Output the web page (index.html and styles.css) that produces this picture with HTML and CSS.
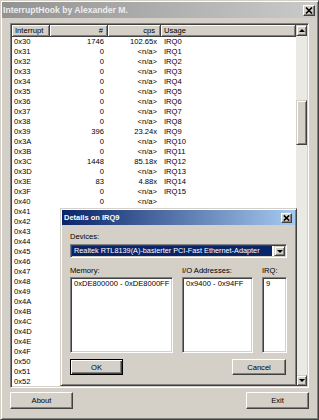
FILE: index.html
```html
<!DOCTYPE html>
<html>
<head>
<meta charset="utf-8">
<link rel="stylesheet" href="styles.css">
</head>
<body>
<div class="window">
  <div class="titlebar inactive">
    <span class="title">InterruptHook by Alexander M.</span>
    <span class="close"><svg width="8" height="7" viewBox="0 0 8 7"><path d="M1 0.5 L7 6.5 M7 0.5 L1 6.5" stroke="#000" stroke-width="1.6"/></svg></span>
  </div>
  <div class="client">
    <div class="listview">
      <div class="list">
        <div class="header">
          <div class="hcell">Interrupt</div>
          <div class="hcell right">#</div>
          <div class="hcell right cps">cps</div>
          <div class="hcell">Usage</div>
        </div>
        <div class="rows">
          <div class="row"><span>0x30</span><span class="r">1746</span><span class="r">102.65x</span><span class="u">IRQ0</span></div>
          <div class="row"><span>0x31</span><span class="r">0</span><span class="r">&lt;n/a&gt;</span><span class="u">IRQ1</span></div>
          <div class="row"><span>0x32</span><span class="r">0</span><span class="r">&lt;n/a&gt;</span><span class="u">IRQ2</span></div>
          <div class="row"><span>0x33</span><span class="r">0</span><span class="r">&lt;n/a&gt;</span><span class="u">IRQ3</span></div>
          <div class="row"><span>0x34</span><span class="r">0</span><span class="r">&lt;n/a&gt;</span><span class="u">IRQ4</span></div>
          <div class="row"><span>0x35</span><span class="r">0</span><span class="r">&lt;n/a&gt;</span><span class="u">IRQ5</span></div>
          <div class="row"><span>0x36</span><span class="r">0</span><span class="r">&lt;n/a&gt;</span><span class="u">IRQ6</span></div>
          <div class="row"><span>0x37</span><span class="r">0</span><span class="r">&lt;n/a&gt;</span><span class="u">IRQ7</span></div>
          <div class="row"><span>0x38</span><span class="r">0</span><span class="r">&lt;n/a&gt;</span><span class="u">IRQ8</span></div>
          <div class="row"><span>0x39</span><span class="r">396</span><span class="r">23.24x</span><span class="u">IRQ9</span></div>
          <div class="row"><span>0x3A</span><span class="r">0</span><span class="r">&lt;n/a&gt;</span><span class="u">IRQ10</span></div>
          <div class="row"><span>0x3B</span><span class="r">0</span><span class="r">&lt;n/a&gt;</span><span class="u">IRQ11</span></div>
          <div class="row"><span>0x3C</span><span class="r">1448</span><span class="r">85.18x</span><span class="u">IRQ12</span></div>
          <div class="row"><span>0x3D</span><span class="r">0</span><span class="r">&lt;n/a&gt;</span><span class="u">IRQ13</span></div>
          <div class="row"><span>0x3E</span><span class="r">83</span><span class="r">4.88x</span><span class="u">IRQ14</span></div>
          <div class="row"><span>0x3F</span><span class="r">0</span><span class="r">&lt;n/a&gt;</span><span class="u">IRQ15</span></div>
          <div class="row"><span>0x40</span><span class="r">0</span><span class="r">&lt;n/a&gt;</span><span class="u"></span></div>
          <div class="row"><span>0x41</span></div>
          <div class="row"><span>0x42</span></div>
          <div class="row"><span>0x43</span></div>
          <div class="row"><span>0x44</span></div>
          <div class="row"><span>0x45</span></div>
          <div class="row"><span>0x46</span></div>
          <div class="row"><span>0x47</span></div>
          <div class="row"><span>0x48</span></div>
          <div class="row"><span>0x49</span></div>
          <div class="row"><span>0x4A</span></div>
          <div class="row"><span>0x4B</span></div>
          <div class="row"><span>0x4C</span></div>
          <div class="row"><span>0x4D</span></div>
          <div class="row"><span>0x4E</span></div>
          <div class="row"><span>0x4F</span></div>
          <div class="row"><span>0x50</span></div>
          <div class="row"><span>0x51</span></div>
          <div class="row"><span>0x52</span></div>
        </div>
      </div>
      <div class="vscroll">
        <div class="sbtn"><span class="arrow-up"></span></div>
        <div class="track"><div class="thumb"></div></div>
        <div class="sbtn"><span class="arrow-down"></span></div>
      </div>
    </div>
    <div class="buttons">
      <div class="btn">About</div>
      <div class="btn">Exit</div>
    </div>
  </div>

  <div class="dialog">
    <div class="titlebar active">
      <span class="dtitle">Details on IRQ9</span>
      <span class="close small"><svg width="7" height="6" viewBox="0 0 7 6"><path d="M0.8 0.4 L6.2 5.6 M6.2 0.4 L0.8 5.6" stroke="#000" stroke-width="1.5"/></svg></span>
    </div>
    <div class="dcontent">
      <div class="label">Devices:</div>
      <div class="combo">
        <div class="combo-text">Realtek RTL8139(A)-basierter PCI-Fast Ethernet-Adapter</div>
        <div class="combo-btn"><span class="arrow-down"></span></div>
      </div>
      <div class="fields">
        <div class="field">
          <div class="label">Memory:</div>
          <div class="box">0xDE800000 - 0xDE8000FF</div>
        </div>
        <div class="field">
          <div class="label">I/O Addresses:</div>
          <div class="box">0x9400 - 0x94FF</div>
        </div>
        <div class="field">
          <div class="label">IRQ:</div>
          <div class="box">9</div>
        </div>
      </div>
      <div class="dbuttons">
        <div class="btn default">OK</div>
        <div class="btn cancel">Cancel</div>
      </div>
    </div>
  </div>
</div>
</body>
</html>
```
FILE: styles.css
```css
html, body {
  margin: 0;
  padding: 0;
  background: #d4d0c8;
}
body {
  font-family: "Liberation Sans", Arial, sans-serif;
  font-size: 7.6px;
  color: #000;
}
.window {
  position: relative;
  width: 319px;
  height: 420px;
  box-sizing: border-box;
  border: 1px solid;
  border-color: #d4d0c8 #404040 #404040 #d4d0c8;
  box-shadow: inset 1px 1px #fff, inset -1px -1px #808080;
  padding: 1px;
  background: #d4d0c8;
  display: flex;
  flex-direction: column;
  overflow: hidden;
}
.titlebar {
  flex: none;
  height: 16px;
  display: flex;
  align-items: center;
  justify-content: space-between;
  padding: 0 2px 0 1px;
}
.titlebar.inactive {
  background: linear-gradient(to right, #929292, #cacaca);
}
.titlebar.active {
  height: 15px;
  background: linear-gradient(to right, #0a246a, #a6caf0);
  padding: 0 3px 0 2px;
}
.title {
  color: #eeeeee;
  font-weight: bold;
  font-size: 8.6px;
}
.dtitle {
  color: #fff;
  font-weight: bold;
  font-size: 7.5px;
}
.close {
  width: 12px;
  height: 11px;
  box-sizing: border-box;
  background: #d4d0c8;
  border: 1px solid;
  border-color: #fff #404040 #404040 #fff;
  box-shadow: inset -1px -1px #808080;
  display: flex;
  align-items: center;
  justify-content: center;
}
.close.small {
  width: 11px;
  height: 10px;
}
.client {
  flex: 1;
  display: flex;
  flex-direction: column;
  padding: 5px 8px 0;
}
.listview {
  flex: none;
  height: 365px;
  box-sizing: border-box;
  border: 1px solid;
  border-color: #808080 #fff #fff #808080;
  box-shadow: inset 1px 1px #404040, inset -1px -1px #d4d0c8;
  padding: 1px;
  display: flex;
  background: #fff;
}
.list {
  flex: 1;
  min-width: 0;
  overflow: hidden;
  display: flex;
  flex-direction: column;
}
.header, .row {
  display: grid;
  grid-template-columns: 38px 58px 53px 1fr;
}
.header {
  flex: none;
  height: 12px;
}
.hcell {
  box-sizing: border-box;
  background: #d4d0c8;
  border-right: 1px solid #404040;
  border-bottom: 1px solid #404040;
  box-shadow: inset 1px 1px #fff, inset -1px -1px #808080;
  line-height: 11px;
  padding: 0 0 0 3px;
  white-space: nowrap;
}
.hcell.right {
  text-align: right;
  padding: 0 4px 0 0;
}
.hcell.cps {
  padding-right: 5px;
}
.rows {
  overflow: hidden;
}
.row {
  height: 10px;
  line-height: 10px;
  white-space: nowrap;
}
.row span {
  padding-left: 2px;
}
.row span.r {
  text-align: right;
  padding: 0 4px 0 0;
}
.row span.u {
  padding-left: 3px;
}
.vscroll {
  flex: none;
  width: 11px;
  display: flex;
  flex-direction: column;
  background: #ebe9e4;
}
.sbtn, .thumb, .combo-btn {
  box-sizing: border-box;
  background: #d4d0c8;
  border: 1px solid;
  border-color: #d4d0c8 #404040 #404040 #d4d0c8;
  box-shadow: inset 1px 1px #fff, inset -1px -1px #808080;
}
.sbtn {
  flex: none;
  height: 11px;
  display: flex;
  align-items: center;
  justify-content: center;
}
.track {
  flex: 1;
}
.thumb {
  margin-top: 64px;
  height: 45px;
}
.arrow-up {
  width: 0;
  height: 0;
  border-left: 3px solid transparent;
  border-right: 3px solid transparent;
  border-bottom: 3px solid #000;
}
.arrow-down {
  width: 0;
  height: 0;
  border-left: 3px solid transparent;
  border-right: 3px solid transparent;
  border-top: 3px solid #000;
}
.buttons {
  margin-top: 4px;
  display: flex;
  justify-content: space-between;
}
.btn {
  width: 63px;
  height: 17px;
  box-sizing: border-box;
  border: 1px solid;
  border-color: #fff #404040 #404040 #fff;
  box-shadow: inset -1px -1px #808080;
  background: #d4d0c8;
  display: flex;
  align-items: center;
  justify-content: center;
}
.dialog {
  position: absolute;
  left: 59px;
  top: 207px;
  width: 237px;
  height: 178px;
  box-sizing: border-box;
  border: 1px solid;
  border-color: #d4d0c8 #404040 #404040 #d4d0c8;
  box-shadow: inset 1px 1px #fff, inset -1px -1px #808080;
  padding: 1px;
  background: #d4d0c8;
  display: flex;
  flex-direction: column;
}
.dcontent {
  padding: 7px 8px 0;
  display: flex;
  flex-direction: column;
}
.label {
  height: 10px;
  line-height: 10px;
  white-space: nowrap;
}
.combo {
  margin-top: 2px;
  height: 14px;
  box-sizing: border-box;
  border: 1px solid;
  border-color: #808080 #fff #fff #808080;
  box-shadow: inset 1px 1px #404040, inset -1px -1px #d4d0c8;
  padding: 1px;
  background: #fff;
  display: flex;
}
.combo-text {
  flex: 1;
  background: #0a246a;
  color: #fff;
  font-size: 7.3px;
  line-height: 10px;
  padding-left: 2px;
  margin-right: 2px;
  white-space: nowrap;
  overflow: hidden;
}
.combo-btn {
  flex: none;
  width: 11px;
  display: flex;
  align-items: center;
  justify-content: center;
}
.fields {
  margin-top: 8px;
  display: grid;
  grid-template-columns: 103px 71px 25px;
  column-gap: 9px;
}
.field .box {
  margin-top: 1px;
  height: 76px;
  box-sizing: border-box;
  border: 1px solid;
  border-color: #808080 #fff #fff #808080;
  box-shadow: inset 1px 1px #404040, inset -1px -1px #d4d0c8;
  background: #fff;
  padding: 1px 3px;
  line-height: 9px;
  white-space: nowrap;
  overflow: hidden;
}
.dbuttons {
  margin-top: 6px;
  display: flex;
  justify-content: space-between;
}
.dbuttons .btn {
  height: 16px;
}
.btn.default {
  width: 53px;
  border: 1px solid #000;
  box-shadow: inset 1px 1px #fff, inset -1px -1px #404040, inset -2px -2px #808080;
}
.btn.cancel {
  width: 54px;
  margin-right: 1px;
}
```
